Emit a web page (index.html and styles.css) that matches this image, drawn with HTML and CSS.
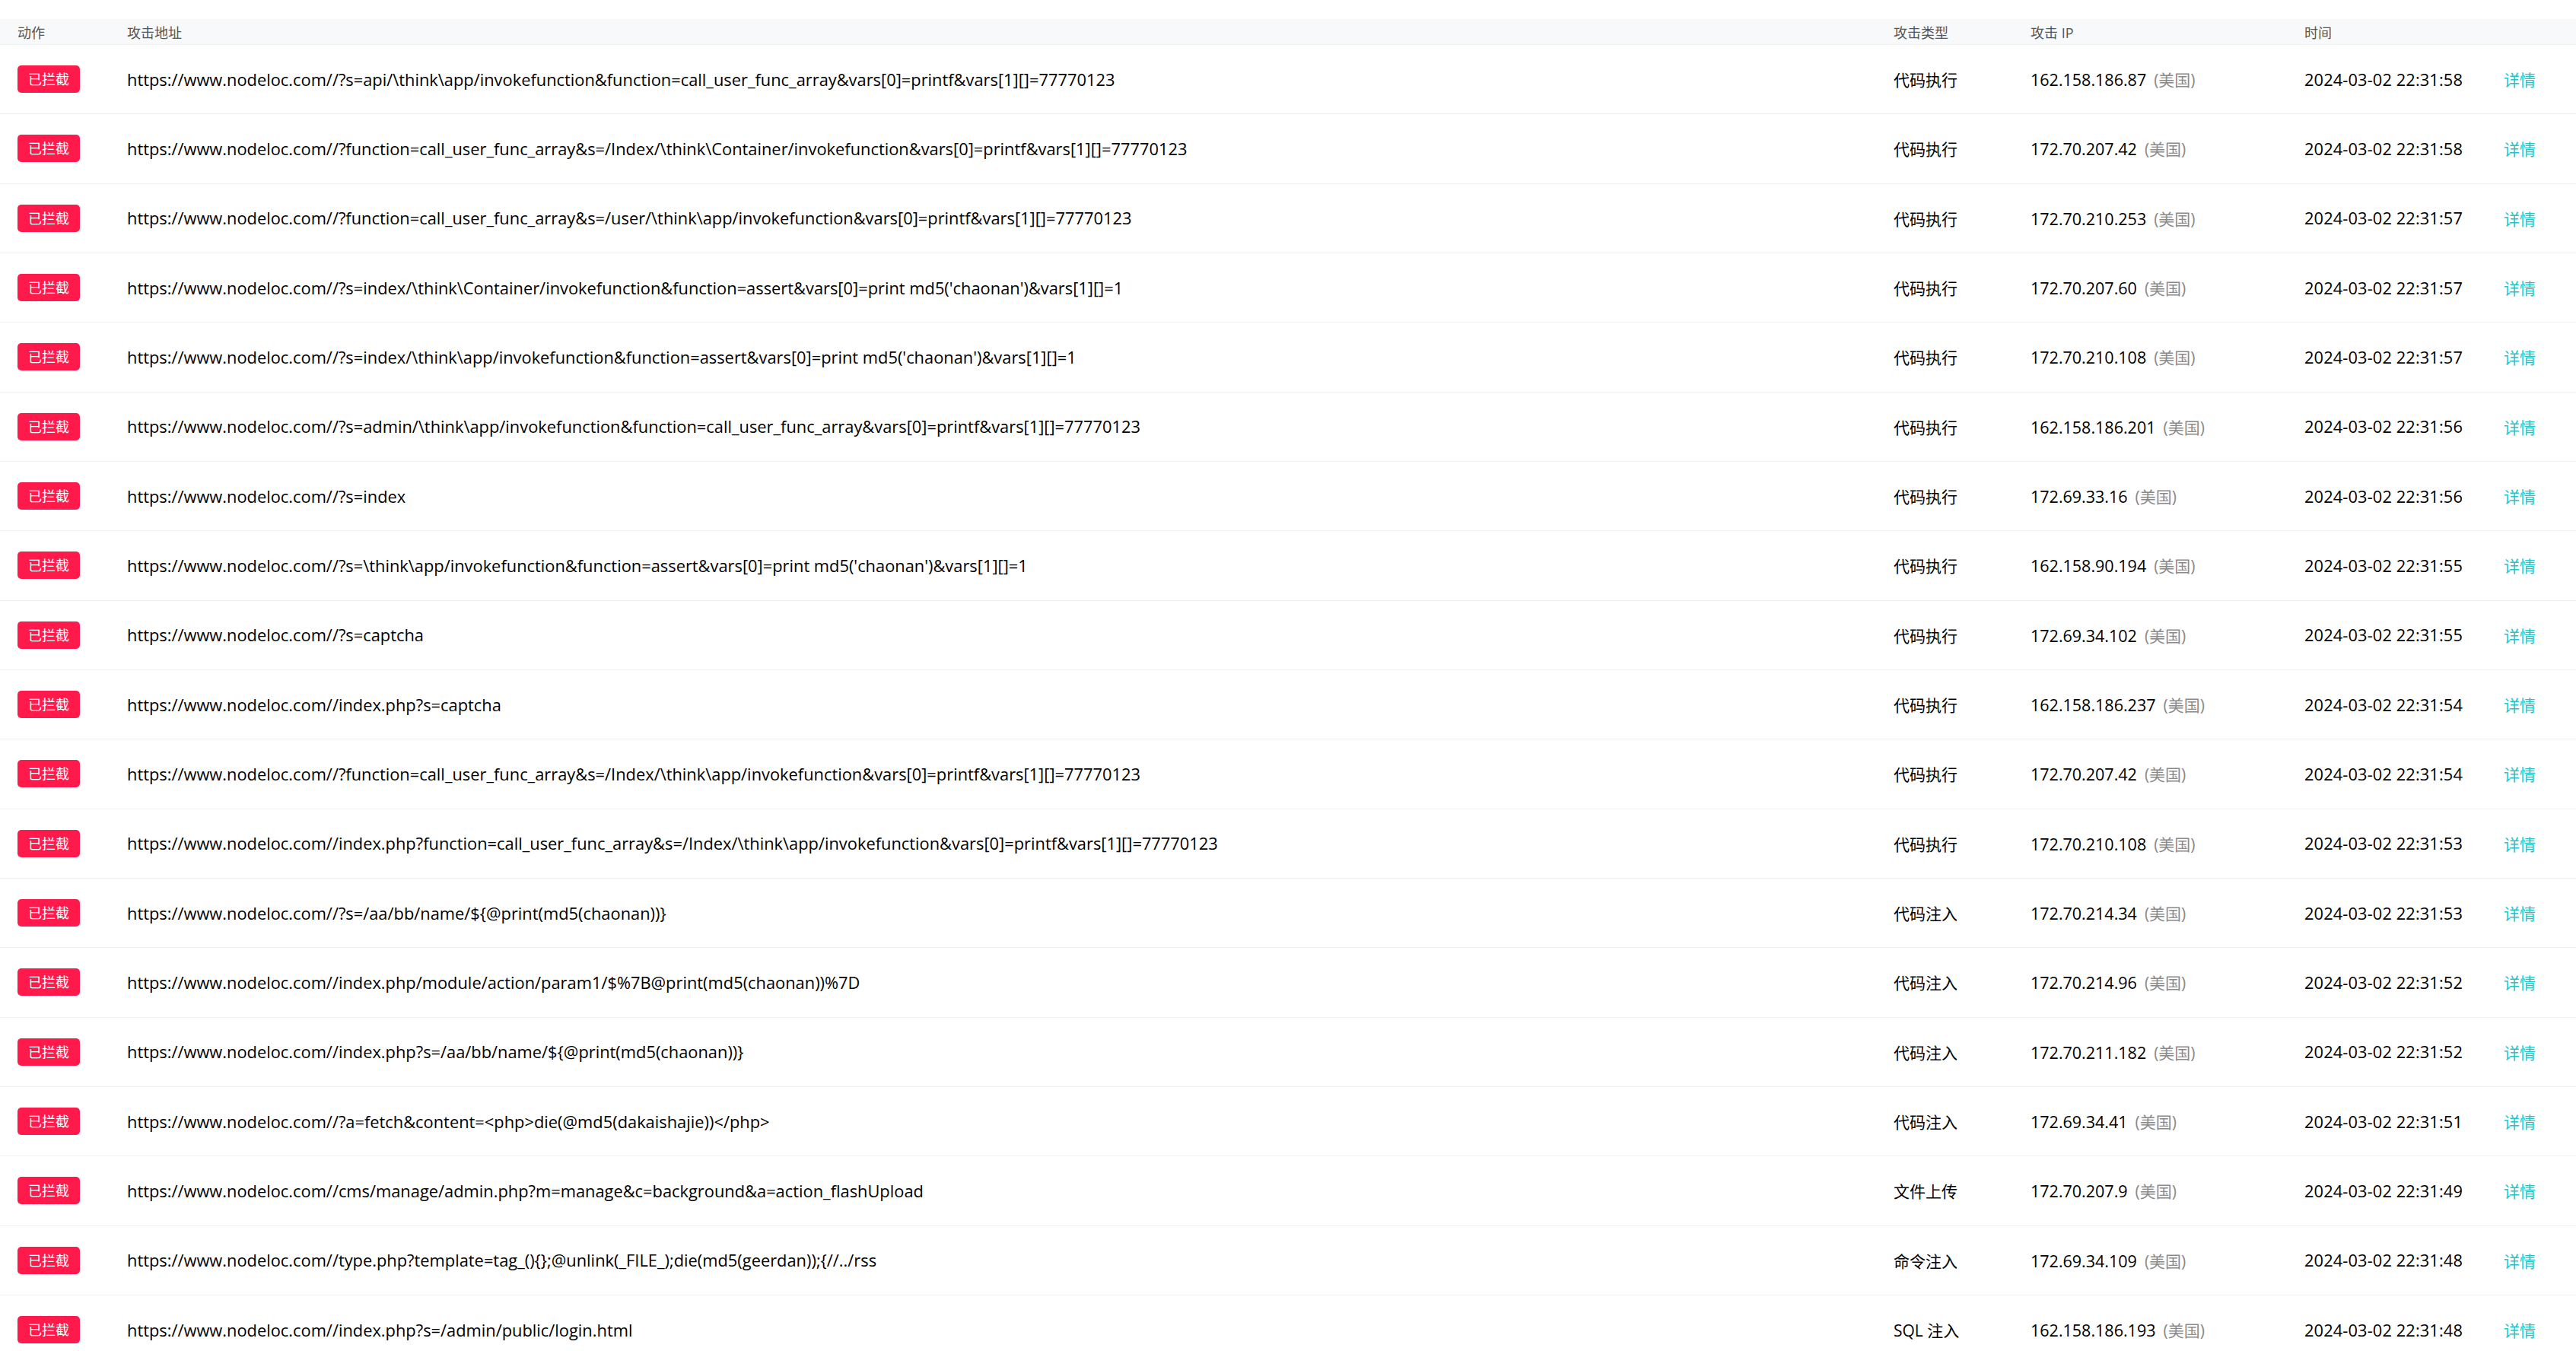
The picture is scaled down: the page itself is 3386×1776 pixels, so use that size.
FILE: index.html
```html
<!DOCTYPE html>
<html lang="zh-CN">
<head>
<meta charset="utf-8">
<title>拦截记录</title>
<link rel="stylesheet" href="styles.css">
</head>
<body>
<div class="table">
  <div class="row head">
    <div class="cell">动作</div>
    <div class="cell">攻击地址</div>
    <div class="cell">攻击类型</div>
    <div class="cell">攻击 IP</div>
    <div class="cell">时间</div>
    <div class="cell"></div>
  </div>

  <div class="row">
    <div class="cell"><span class="badge">已拦截</span></div>
    <div class="cell url">https://www.nodeloc.com//?s=api/\think\app/invokefunction&amp;function=call_user_func_array&amp;vars[0]=printf&amp;vars[1][]=77770123</div>
    <div class="cell">代码执行</div>
    <div class="cell"><span class="ip">162.158.186.87</span><span class="geo">(美国)</span></div>
    <div class="cell time">2024-03-02 22:31:58</div>
    <div class="cell"><a class="detail">详情</a></div>
  </div>

  <div class="row">
    <div class="cell"><span class="badge">已拦截</span></div>
    <div class="cell url">https://www.nodeloc.com//?function=call_user_func_array&amp;s=/Index/\think\Container/invokefunction&amp;vars[0]=printf&amp;vars[1][]=77770123</div>
    <div class="cell">代码执行</div>
    <div class="cell"><span class="ip">172.70.207.42</span><span class="geo">(美国)</span></div>
    <div class="cell time">2024-03-02 22:31:58</div>
    <div class="cell"><a class="detail">详情</a></div>
  </div>

  <div class="row">
    <div class="cell"><span class="badge">已拦截</span></div>
    <div class="cell url">https://www.nodeloc.com//?function=call_user_func_array&amp;s=/user/\think\app/invokefunction&amp;vars[0]=printf&amp;vars[1][]=77770123</div>
    <div class="cell">代码执行</div>
    <div class="cell"><span class="ip">172.70.210.253</span><span class="geo">(美国)</span></div>
    <div class="cell time">2024-03-02 22:31:57</div>
    <div class="cell"><a class="detail">详情</a></div>
  </div>

  <div class="row">
    <div class="cell"><span class="badge">已拦截</span></div>
    <div class="cell url">https://www.nodeloc.com//?s=index/\think\Container/invokefunction&amp;function=assert&amp;vars[0]=print md5('chaonan')&amp;vars[1][]=1</div>
    <div class="cell">代码执行</div>
    <div class="cell"><span class="ip">172.70.207.60</span><span class="geo">(美国)</span></div>
    <div class="cell time">2024-03-02 22:31:57</div>
    <div class="cell"><a class="detail">详情</a></div>
  </div>

  <div class="row">
    <div class="cell"><span class="badge">已拦截</span></div>
    <div class="cell url">https://www.nodeloc.com//?s=index/\think\app/invokefunction&amp;function=assert&amp;vars[0]=print md5('chaonan')&amp;vars[1][]=1</div>
    <div class="cell">代码执行</div>
    <div class="cell"><span class="ip">172.70.210.108</span><span class="geo">(美国)</span></div>
    <div class="cell time">2024-03-02 22:31:57</div>
    <div class="cell"><a class="detail">详情</a></div>
  </div>

  <div class="row">
    <div class="cell"><span class="badge">已拦截</span></div>
    <div class="cell url">https://www.nodeloc.com//?s=admin/\think\app/invokefunction&amp;function=call_user_func_array&amp;vars[0]=printf&amp;vars[1][]=77770123</div>
    <div class="cell">代码执行</div>
    <div class="cell"><span class="ip">162.158.186.201</span><span class="geo">(美国)</span></div>
    <div class="cell time">2024-03-02 22:31:56</div>
    <div class="cell"><a class="detail">详情</a></div>
  </div>

  <div class="row">
    <div class="cell"><span class="badge">已拦截</span></div>
    <div class="cell url">https://www.nodeloc.com//?s=index</div>
    <div class="cell">代码执行</div>
    <div class="cell"><span class="ip">172.69.33.16</span><span class="geo">(美国)</span></div>
    <div class="cell time">2024-03-02 22:31:56</div>
    <div class="cell"><a class="detail">详情</a></div>
  </div>

  <div class="row">
    <div class="cell"><span class="badge">已拦截</span></div>
    <div class="cell url">https://www.nodeloc.com//?s=\think\app/invokefunction&amp;function=assert&amp;vars[0]=print md5('chaonan')&amp;vars[1][]=1</div>
    <div class="cell">代码执行</div>
    <div class="cell"><span class="ip">162.158.90.194</span><span class="geo">(美国)</span></div>
    <div class="cell time">2024-03-02 22:31:55</div>
    <div class="cell"><a class="detail">详情</a></div>
  </div>

  <div class="row">
    <div class="cell"><span class="badge">已拦截</span></div>
    <div class="cell url">https://www.nodeloc.com//?s=captcha</div>
    <div class="cell">代码执行</div>
    <div class="cell"><span class="ip">172.69.34.102</span><span class="geo">(美国)</span></div>
    <div class="cell time">2024-03-02 22:31:55</div>
    <div class="cell"><a class="detail">详情</a></div>
  </div>

  <div class="row">
    <div class="cell"><span class="badge">已拦截</span></div>
    <div class="cell url">https://www.nodeloc.com//index.php?s=captcha</div>
    <div class="cell">代码执行</div>
    <div class="cell"><span class="ip">162.158.186.237</span><span class="geo">(美国)</span></div>
    <div class="cell time">2024-03-02 22:31:54</div>
    <div class="cell"><a class="detail">详情</a></div>
  </div>

  <div class="row">
    <div class="cell"><span class="badge">已拦截</span></div>
    <div class="cell url">https://www.nodeloc.com//?function=call_user_func_array&amp;s=/Index/\think\app/invokefunction&amp;vars[0]=printf&amp;vars[1][]=77770123</div>
    <div class="cell">代码执行</div>
    <div class="cell"><span class="ip">172.70.207.42</span><span class="geo">(美国)</span></div>
    <div class="cell time">2024-03-02 22:31:54</div>
    <div class="cell"><a class="detail">详情</a></div>
  </div>

  <div class="row">
    <div class="cell"><span class="badge">已拦截</span></div>
    <div class="cell url">https://www.nodeloc.com//index.php?function=call_user_func_array&amp;s=/Index/\think\app/invokefunction&amp;vars[0]=printf&amp;vars[1][]=77770123</div>
    <div class="cell">代码执行</div>
    <div class="cell"><span class="ip">172.70.210.108</span><span class="geo">(美国)</span></div>
    <div class="cell time">2024-03-02 22:31:53</div>
    <div class="cell"><a class="detail">详情</a></div>
  </div>

  <div class="row">
    <div class="cell"><span class="badge">已拦截</span></div>
    <div class="cell url">https://www.nodeloc.com//?s=/aa/bb/name/${@print(md5(chaonan))}</div>
    <div class="cell">代码注入</div>
    <div class="cell"><span class="ip">172.70.214.34</span><span class="geo">(美国)</span></div>
    <div class="cell time">2024-03-02 22:31:53</div>
    <div class="cell"><a class="detail">详情</a></div>
  </div>

  <div class="row">
    <div class="cell"><span class="badge">已拦截</span></div>
    <div class="cell url">https://www.nodeloc.com//index.php/module/action/param1/$%7B@print(md5(chaonan))%7D</div>
    <div class="cell">代码注入</div>
    <div class="cell"><span class="ip">172.70.214.96</span><span class="geo">(美国)</span></div>
    <div class="cell time">2024-03-02 22:31:52</div>
    <div class="cell"><a class="detail">详情</a></div>
  </div>

  <div class="row">
    <div class="cell"><span class="badge">已拦截</span></div>
    <div class="cell url">https://www.nodeloc.com//index.php?s=/aa/bb/name/${@print(md5(chaonan))}</div>
    <div class="cell">代码注入</div>
    <div class="cell"><span class="ip">172.70.211.182</span><span class="geo">(美国)</span></div>
    <div class="cell time">2024-03-02 22:31:52</div>
    <div class="cell"><a class="detail">详情</a></div>
  </div>

  <div class="row">
    <div class="cell"><span class="badge">已拦截</span></div>
    <div class="cell url">https://www.nodeloc.com//?a=fetch&amp;content=&lt;php&gt;die(@md5(dakaishajie))&lt;/php&gt;</div>
    <div class="cell">代码注入</div>
    <div class="cell"><span class="ip">172.69.34.41</span><span class="geo">(美国)</span></div>
    <div class="cell time">2024-03-02 22:31:51</div>
    <div class="cell"><a class="detail">详情</a></div>
  </div>

  <div class="row">
    <div class="cell"><span class="badge">已拦截</span></div>
    <div class="cell url">https://www.nodeloc.com//cms/manage/admin.php?m=manage&amp;c=background&amp;a=action_flashUpload</div>
    <div class="cell">文件上传</div>
    <div class="cell"><span class="ip">172.70.207.9</span><span class="geo">(美国)</span></div>
    <div class="cell time">2024-03-02 22:31:49</div>
    <div class="cell"><a class="detail">详情</a></div>
  </div>

  <div class="row">
    <div class="cell"><span class="badge">已拦截</span></div>
    <div class="cell url">https://www.nodeloc.com//type.php?template=tag_(){};@unlink(_FILE_);die(md5(geerdan));{//../rss</div>
    <div class="cell">命令注入</div>
    <div class="cell"><span class="ip">172.69.34.109</span><span class="geo">(美国)</span></div>
    <div class="cell time">2024-03-02 22:31:48</div>
    <div class="cell"><a class="detail">详情</a></div>
  </div>

  <div class="row">
    <div class="cell"><span class="badge">已拦截</span></div>
    <div class="cell url">https://www.nodeloc.com//index.php?s=/admin/public/login.html</div>
    <div class="cell">SQL 注入</div>
    <div class="cell"><span class="ip">162.158.186.193</span><span class="geo">(美国)</span></div>
    <div class="cell time">2024-03-02 22:31:48</div>
    <div class="cell"><a class="detail">详情</a></div>
  </div>
</div>
</body>
</html>
```

FILE: styles.css
```css
html, body {
  margin: 0;
  padding: 0;
  background: #ffffff;
}

body {
  padding-top: 25px;
  font-family: "Open Sans", "Noto Sans CJK SC", sans-serif;
  color: #000000;
}

.table {
  display: flex;
  flex-direction: column;
}

.row {
  display: grid;
  grid-template-columns: 144px 2322px 180px 360px 262px 1fr;
  align-items: center;
  padding-left: 23px;
  height: 90.33px;
  border-bottom: 1px solid #f0f0f0;
  font-size: 21px;
  white-space: nowrap;
}

.row.head {
  height: 33px;
  background: #f8f9fa;
  font-size: 18px;
  color: #555555;
}

.cell {
  overflow: hidden;
}

.url {
  font-size: 21.85px;
}

.badge {
  display: inline-block;
  height: 36px;
  line-height: 36px;
  padding: 0 14px;
  background: #ff1a4b;
  color: #ffffff;
  font-size: 18px;
  border-radius: 5px;
}

.ip {
  font-size: 21.5px;
}

.geo {
  margin-left: 10px;
  color: #8a8a8a;
}

.time {
  font-size: 21.85px;
  letter-spacing: 0.1px;
}

.detail {
  color: #1ec6c8;
  cursor: pointer;
}
```
